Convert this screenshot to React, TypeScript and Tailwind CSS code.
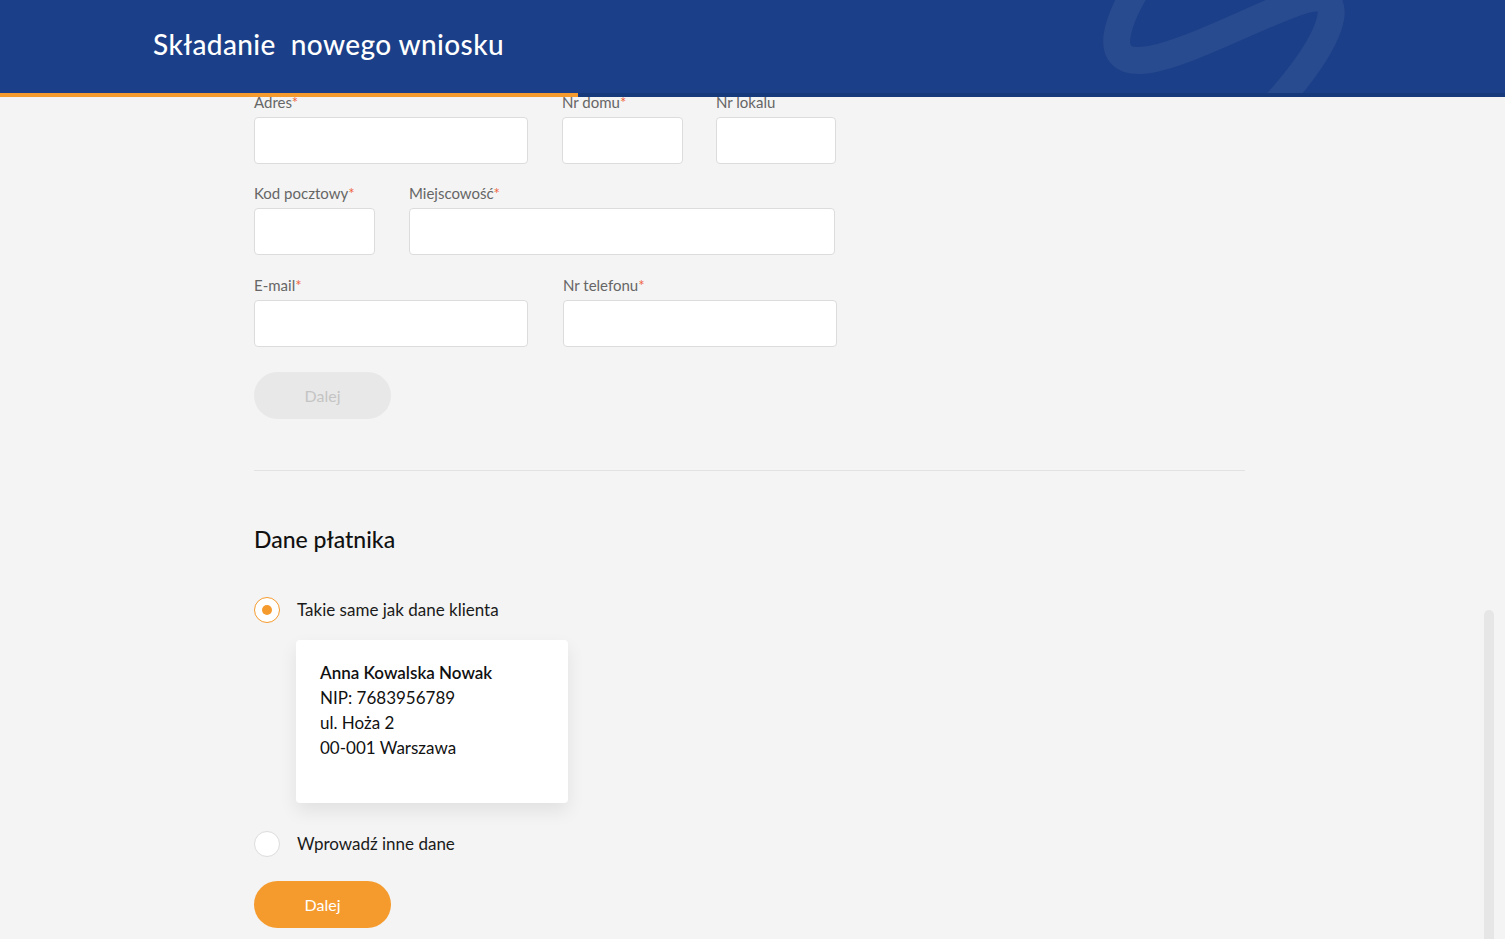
import React from 'react';

type FieldProps = {
	label: string;
	required?: boolean;
	width: string;
};

const Field = ({ label, required, width }: FieldProps) => (
	<div className={`flex flex-col ${width}`}>
		<label className="text-[15px] leading-[18px] text-[#666] mb-[6px]">
			{label}
			{required && <span className="text-[#f0643c]">*</span>}
		</label>
		<input
			type="text"
			className="h-[47px] w-full rounded-[4px] border border-[#dcdcdc] bg-white outline-none"
		/>
	</div>
);

const Radio = ({ checked }: { checked?: boolean }) => (
	<span
		className={`flex h-[26px] w-[26px] shrink-0 items-center justify-center rounded-full bg-white border ${
			checked ? 'border-[#f59b2d]' : 'border-[#dcdcdc]'
		}`}
	>
		{checked && <span className="h-[10px] w-[10px] rounded-full bg-[#f59b2d]" />}
	</span>
);

const Header = () => (
	<header className="absolute inset-x-0 top-0 z-10 h-[97px] overflow-hidden bg-[#1b3f88]">
		{/* brand swirl */}
		<svg className="absolute inset-0" width="1505" height="97" viewBox="0 0 1505 97" fill="none">
			<path
				d="M1142 -20 C1118 18 1098 66 1146 60 C1192 54 1286 0 1314 -2 C1346 -4 1334 40 1272 108"
				stroke="#ffffff"
				strokeOpacity="0.06"
				strokeWidth="27"
				strokeLinecap="round"
			/>
		</svg>
		<div className="relative flex h-[93px] items-center pl-[153px]">
			<h1 className="text-[28px] text-white font-medium tracking-[0.4px] whitespace-pre pb-[6px]">
				Składanie  nowego wniosku
			</h1>
		</div>
		<div className="relative flex h-[4px] bg-[#15397a]">
			<div className="w-[578px] bg-[#f59b2d]" />
		</div>
	</header>
);

export default function App() {
	return (
		<div
			className="relative h-[939px] overflow-hidden bg-[#f4f4f4] text-[#1a1a1a]"
			style={{ fontFamily: 'Lato, "Open Sans", sans-serif' }}
		>
			<Header />

			<main className="ml-[254px] w-[991px] pt-[93px]">
				<div className="flex flex-col">
					<div className="flex">
						<Field label="Adres" required width="w-[274px]" />
						<div className="ml-[34px]">
							<Field label="Nr domu" required width="w-[121px]" />
						</div>
						<div className="ml-[33px]">
							<Field label="Nr lokalu" width="w-[120px]" />
						</div>
					</div>
					<div className="mt-[20px] flex gap-[34px]">
						<Field label="Kod pocztowy" required width="w-[121px]" />
						<Field label="Miejscowość" required width="w-[426px]" />
					</div>
					<div className="mt-[21px] flex gap-[35px]">
						<Field label="E-mail" required width="w-[274px]" />
						<Field label="Nr telefonu" required width="w-[274px]" />
					</div>
				</div>

				<button
					disabled
					className="mt-[25px] h-[47px] w-[137px] rounded-full bg-[#e8e8e8] text-[16px] text-[#c4c4c4]"
				>
					Dalej
				</button>

				<hr className="mt-[51px] border-0 border-t border-[#e2e2e2]" />

				<h2 className="mt-[54px] text-[23px] leading-[28px] font-medium text-[#111]">Dane płatnika</h2>

				<div className="mt-[44px] flex items-center gap-[17px]">
					<Radio checked />
					<span className="text-[17px] text-[#1a1a1a]">Takie same jak dane klienta</span>
				</div>

				<div className="ml-[42px] mt-[17px] h-[163px] w-[272px] rounded-[4px] bg-white px-[24px] pt-[20px] shadow-[0_8px_18px_rgba(0,0,0,0.08)] text-[17px] leading-[25px] text-[#111]">
					<p className="font-semibold">Anna Kowalska Nowak</p>
					<p>NIP: 7683956789</p>
					<p>ul. Hoża 2</p>
					<p>00-001 Warszawa</p>
				</div>

				<div className="mt-[28px] flex items-center gap-[17px]">
					<Radio />
					<span className="text-[17px] text-[#1a1a1a]">Wprowadź inne dane</span>
				</div>

				<button className="mt-[24px] h-[47px] w-[137px] rounded-full bg-[#f59b2d] text-[16px] text-white">
					Dalej
				</button>
			</main>

			{/* scroll thumb */}
			<div className="absolute left-[1484px] top-[610px] h-[360px] w-[10px] rounded-full bg-[#e6e6e6]" />
		</div>
	);
}
